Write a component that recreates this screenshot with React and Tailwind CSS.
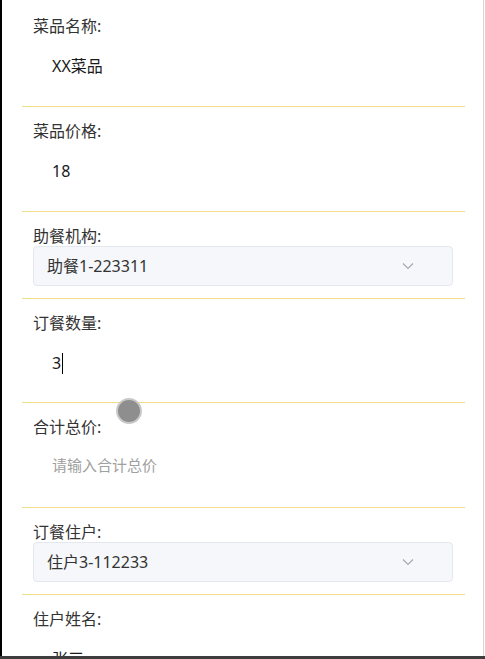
import { useState } from "react";

const FONT = { fontFamily: '"Noto Sans", "Noto Sans CJK SC", sans-serif' };

function ChevronDown() {
  return (
    <svg width="12" height="8" viewBox="0 0 12 8" fill="none">
      <path d="M1 1.5L6 6.5L11 1.5" stroke="#a8abb2" strokeWidth="1.2" />
    </svg>
  );
}

function Divider() {
  return <div className="h-px bg-[#f2dd8c]" />;
}

function InputField({ label, value, placeholder, caret }) {
  return (
    <>
      <div className={caret ? "pt-[14px] pb-[19px] px-[11px]" : "pt-[14px] pb-[20px] px-[11px]"}>
        <div className="h-[20px] leading-[20px] text-[16px] text-[#333]">{label}</div>
        <div className="mt-[10px] h-[40px] flex items-center pl-[19px] text-[16px]">
          {value ? (
            <span className="text-[#1a1a1a]">{value}</span>
          ) : (
            <span className="text-[#a0a0a0] text-[15px] -mt-[3px]">{placeholder}</span>
          )}
          {caret && <span className="ml-[1px] w-px h-[21px] bg-black" />}
        </div>
      </div>
      <Divider />
    </>
  );
}

function SelectField({ label, value }) {
  return (
    <>
      <div className="pt-[14px] pb-[12px] pl-[11px] pr-[12px]">
        <div className="h-[20px] leading-[20px] text-[16px] text-[#333]">{label}</div>
        <div className="h-[40px] flex items-center justify-between pl-[13px] pr-[38px] bg-[#f5f7fa] border border-[#e4e7ed] rounded-[4px]">
          <span className="text-[16px] text-[#333]">{value}</span>
          <ChevronDown />
        </div>
      </div>
      <Divider />
    </>
  );
}

export default function App() {
  const [fields] = useState([
    { type: "input", label: "菜品名称:", value: "XX菜品" },
    { type: "input", label: "菜品价格:", value: "18" },
    { type: "select", label: "助餐机构:", value: "助餐1-223311" },
    { type: "input", label: "订餐数量:", value: "3", caret: true },
    { type: "input", label: "合计总价:", value: "", placeholder: "请输入合计总价" },
    { type: "select", label: "订餐住户:", value: "住户3-112233" },
    { type: "input", label: "住户姓名:", value: "张三" },
  ]);

  return (
    <div className="w-[485px] h-[659px] flex flex-col bg-white overflow-hidden" style={FONT}>
      <div className="flex-1 min-h-0 flex border-l-2 border-black">
        <div className="relative flex-1 mr-px border-r border-[#d6d6d6] overflow-hidden">
          <div className="pt-[2px] pl-[20px] pr-[18px]">
            {fields.map((f, i) =>
              f.type === "select" ? (
                <SelectField key={i} label={f.label} value={f.value} />
              ) : (
                <InputField
                  key={i}
                  label={f.label}
                  value={f.value}
                  placeholder={f.placeholder}
                  caret={f.caret}
                />
              )
            )}
          </div>

          {/* touch indicator */}
          <div className="absolute left-[114px] top-[398px] w-[26px] h-[26px] rounded-full bg-[#8e8e8e] border-2 border-[#c9c9c9]" />
        </div>
      </div>
      <div className="h-[3px] bg-[#3d3d3d]" />
    </div>
  );
}
